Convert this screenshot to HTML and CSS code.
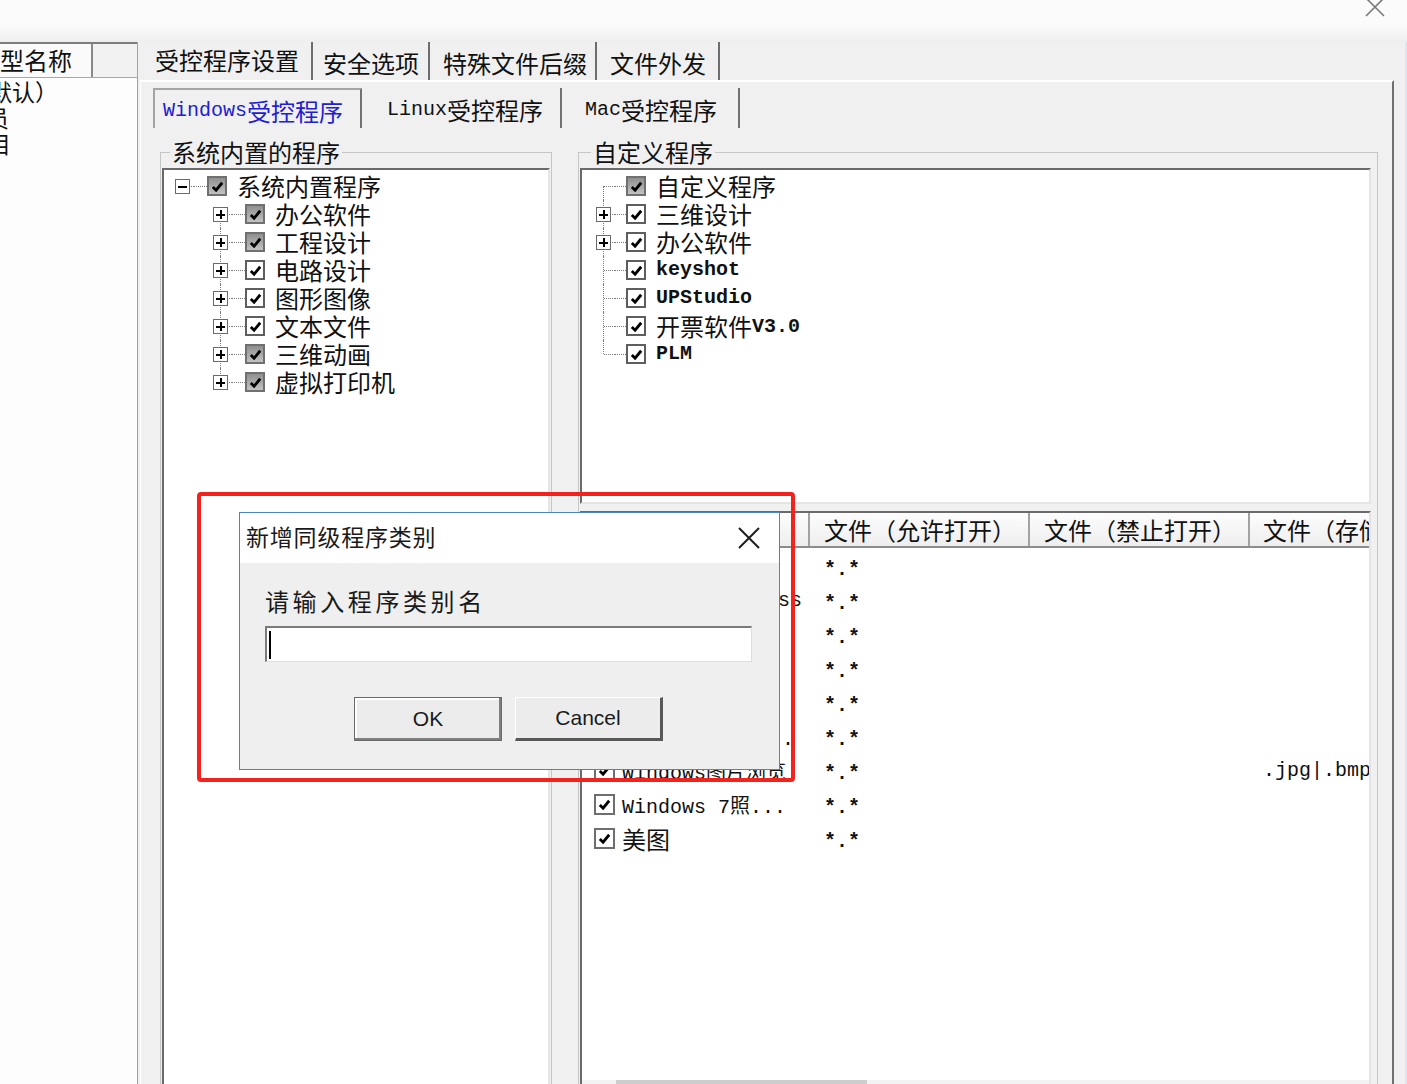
FILE: index.html
```html
<!DOCTYPE html>
<html lang="zh-CN">
<head>
<meta charset="utf-8">
<title>受控程序设置</title>
<link rel="stylesheet" href="styles.css">
</head>
<body>
<div class="window">
  <div class="titlebar">
    <svg class="win-close" width="22" height="22" viewBox="0 0 22 22"><path d="M2 2 L20 20 M20 2 L2 20" stroke="#7a7a7a" stroke-width="1.6" fill="none"/></svg>
  </div>
  <div class="main">
    <div class="typelist">
      <div class="tl-head">
        <div class="tl-c1"><span class="tl-name">类型名称</span></div>
        <div class="tl-c2"></div>
      </div>
      <div class="tl-row"><span class="off1">默认）</span></div>
      <div class="tl-row"><span class="off2">人员</span></div>
      <div class="tl-row"><span class="off3">项目</span></div>
    </div>

    <div class="tabarea">
      <div class="tabs">
        <div class="tab t1 active">受控程序设置</div>
        <div class="tab t2">安全选项</div>
        <div class="tab t3">特殊文件后缀</div>
        <div class="tab t4">文件外发</div>
      </div>
      <div class="panel">
        <div class="subtabs">
          <div class="stab s1 active"><span class="en">Windows</span>受控程序</div>
          <div class="stab s2"><span class="en">Linux</span>受控程序</div>
          <div class="stab s3"><span class="en">Mac</span>受控程序</div>
        </div>
        <div class="groups">
          <fieldset class="group g1">
            <legend>系统内置的程序</legend>
            <div class="treebox tree1">
              <div class="node root"><span class="exp minus"><i class="pm"></i></span><span class="hl"></span><span class="cb gray"><svg viewBox="0 0 16 16"><path d="M3 8.5 L6.5 12 L13 4"/></svg></span><span class="label">系统内置程序</span></div>
              <div class="node child first"><span class="exp plus"><i class="pm"></i></span><span class="hl"></span><span class="cb gray"><svg viewBox="0 0 16 16"><path d="M3 8.5 L6.5 12 L13 4"/></svg></span><span class="label">办公软件</span></div>
              <div class="node child"><span class="exp plus"><i class="pm"></i></span><span class="hl"></span><span class="cb gray"><svg viewBox="0 0 16 16"><path d="M3 8.5 L6.5 12 L13 4"/></svg></span><span class="label">工程设计</span></div>
              <div class="node child"><span class="exp plus"><i class="pm"></i></span><span class="hl"></span><span class="cb"><svg viewBox="0 0 16 16"><path d="M3 8.5 L6.5 12 L13 4"/></svg></span><span class="label">电路设计</span></div>
              <div class="node child"><span class="exp plus"><i class="pm"></i></span><span class="hl"></span><span class="cb"><svg viewBox="0 0 16 16"><path d="M3 8.5 L6.5 12 L13 4"/></svg></span><span class="label">图形图像</span></div>
              <div class="node child"><span class="exp plus"><i class="pm"></i></span><span class="hl"></span><span class="cb"><svg viewBox="0 0 16 16"><path d="M3 8.5 L6.5 12 L13 4"/></svg></span><span class="label">文本文件</span></div>
              <div class="node child"><span class="exp plus"><i class="pm"></i></span><span class="hl"></span><span class="cb gray"><svg viewBox="0 0 16 16"><path d="M3 8.5 L6.5 12 L13 4"/></svg></span><span class="label">三维动画</span></div>
              <div class="node child last"><span class="exp plus"><i class="pm"></i></span><span class="hl"></span><span class="cb gray"><svg viewBox="0 0 16 16"><path d="M3 8.5 L6.5 12 L13 4"/></svg></span><span class="label">虚拟打印机</span></div>
            </div>
          </fieldset>

          <fieldset class="group g2">
            <legend>自定义程序</legend>
            <div class="treebox tree2">
              <div class="node rnode first"><span class="exp"></span><span class="hl"></span><span class="cb gray"><svg viewBox="0 0 16 16"><path d="M3 8.5 L6.5 12 L13 4"/></svg></span><span class="label">自定义程序</span></div>
              <div class="node rnode"><span class="exp plus"><i class="pm"></i></span><span class="hl"></span><span class="cb"><svg viewBox="0 0 16 16"><path d="M3 8.5 L6.5 12 L13 4"/></svg></span><span class="label">三维设计</span></div>
              <div class="node rnode"><span class="exp plus"><i class="pm"></i></span><span class="hl"></span><span class="cb"><svg viewBox="0 0 16 16"><path d="M3 8.5 L6.5 12 L13 4"/></svg></span><span class="label">办公软件</span></div>
              <div class="node rnode"><span class="exp"></span><span class="hl"></span><span class="cb"><svg viewBox="0 0 16 16"><path d="M3 8.5 L6.5 12 L13 4"/></svg></span><span class="label en">keyshot</span></div>
              <div class="node rnode"><span class="exp"></span><span class="hl"></span><span class="cb"><svg viewBox="0 0 16 16"><path d="M3 8.5 L6.5 12 L13 4"/></svg></span><span class="label en">UPStudio</span></div>
              <div class="node rnode"><span class="exp"></span><span class="hl"></span><span class="cb"><svg viewBox="0 0 16 16"><path d="M3 8.5 L6.5 12 L13 4"/></svg></span><span class="label">开票软件</span><span class="en">V3.0</span></div>
              <div class="node rnode last"><span class="exp"></span><span class="hl"></span><span class="cb"><svg viewBox="0 0 16 16"><path d="M3 8.5 L6.5 12 L13 4"/></svg></span><span class="label en">PLM</span></div>
            </div>

            <div class="listbox">
              <div class="lv-head">
                <div class="hc h1">程序名称</div>
                <div class="hc h2">文件（允许打开）</div>
                <div class="hc h3">文件（禁止打开）</div>
                <div class="hc h4">文件（存储类型）</div>
              </div>
              <div class="lv-body">
                <div class="lv-row"><div class="c c1"><span class="cb lcb"><svg viewBox="0 0 16 16"><path d="M3 8.5 L6.5 12 L13 4"/></svg></span><span class="name">画图</span></div><div class="c c2 mono">*.*</div><div class="c c3"></div><div class="c c4"></div></div>
                <div class="lv-row"><div class="c c1"><span class="cb lcb"><svg viewBox="0 0 16 16"><path d="M3 8.5 L6.5 12 L13 4"/></svg></span><span class="name mono">PicPick Express</span></div><div class="c c2 mono">*.*</div><div class="c c3"></div><div class="c c4"></div></div>
                <div class="lv-row"><div class="c c1"><span class="cb lcb"><svg viewBox="0 0 16 16"><path d="M3 8.5 L6.5 12 L13 4"/></svg></span><span class="name mono">Paint.NET</span></div><div class="c c2 mono">*.*</div><div class="c c3"></div><div class="c c4"></div></div>
                <div class="lv-row"><div class="c c1"><span class="cb lcb"><svg viewBox="0 0 16 16"><path d="M3 8.5 L6.5 12 L13 4"/></svg></span><span class="name">看图王</span></div><div class="c c2 mono">*.*</div><div class="c c3"></div><div class="c c4"></div></div>
                <div class="lv-row"><div class="c c1"><span class="cb lcb"><svg viewBox="0 0 16 16"><path d="M3 8.5 L6.5 12 L13 4"/></svg></span><span class="name">光影看图</span></div><div class="c c2 mono">*.*</div><div class="c c3"></div><div class="c c4"></div></div>
                <div class="lv-row"><div class="c c1"><span class="cb lcb"><svg viewBox="0 0 16 16"><path d="M3 8.5 L6.5 12 L13 4"/></svg></span><span class="name mono">Windows 照片...</span></div><div class="c c2 mono">*.*</div><div class="c c3"></div><div class="c c4"></div></div>
                <div class="lv-row"><div class="c c1"><span class="cb lcb"><svg viewBox="0 0 16 16"><path d="M3 8.5 L6.5 12 L13 4"/></svg></span><span class="name mono">Windows图片浏览</span></div><div class="c c2 mono">*.*</div><div class="c c3"></div><div class="c c4 mono">.jpg|.bmp</div></div>
                <div class="lv-row"><div class="c c1"><span class="cb lcb"><svg viewBox="0 0 16 16"><path d="M3 8.5 L6.5 12 L13 4"/></svg></span><span class="name mono">Windows 7照...</span></div><div class="c c2 mono">*.*</div><div class="c c3"></div><div class="c c4"></div></div>
                <div class="lv-row"><div class="c c1"><span class="cb lcb"><svg viewBox="0 0 16 16"><path d="M3 8.5 L6.5 12 L13 4"/></svg></span><span class="name">美图</span></div><div class="c c2 mono">*.*</div><div class="c c3"></div><div class="c c4"></div></div>
              </div>
              <div class="lv-scroll"><div class="thumb"></div></div>
            </div>
          </fieldset>
        </div>
      </div>
    </div>
    <div class="edge"></div>
  </div>

  <div class="highlight"></div>

  <div class="dialog">
    <div class="dlg-title">
      <span>新增同级程序类别</span>
      <svg class="dlg-close" width="24" height="24" viewBox="0 0 24 24"><path d="M2 2 L22 22 M22 2 L2 22" stroke="#1e1e1e" stroke-width="2" fill="none"/></svg>
    </div>
    <div class="dlg-body">
      <div class="dlg-label">请输入程序类别名</div>
      <div class="dlg-input"><span class="caret"></span></div>
      <div class="dlg-btns">
        <div class="btn btn-ok">OK</div>
        <div class="btn btn-cancel">Cancel</div>
      </div>
    </div>
  </div>
</div>
</body>
</html>
```

FILE: styles.css
```css
html, body {
  margin: 0;
  padding: 0;
}
body {
  background: #f0f0f0;
  font-family: "Noto Sans CJK SC", "Noto Sans", sans-serif;
  color: #111;
}
.window {
  position: relative;
  width: 1407px;
  height: 1084px;
  overflow: hidden;
  display: flex;
  flex-direction: column;
}
.titlebar {
  height: 42px;
  flex: none;
  background: linear-gradient(to bottom, #fbfbfb 0, #fbfbfb 24px, #eeeeee 42px);
  display: flex;
  justify-content: flex-end;
  align-items: flex-start;
  padding-right: 21px;
}
.win-close {
  margin-top: -4px;
}
.main {
  flex: 1;
  display: flex;
  min-height: 0;
}

/* left type list */
.typelist {
  width: 137px;
  flex: none;
  background: #fdfdfd;
  border-right: 1px solid #a3a3a3;
  overflow: hidden;
}
.tl-head {
  display: flex;
  height: 36px;
  box-sizing: border-box;
  border-top: 2px solid #7d7d7d;
  border-bottom: 1px solid #a8a8a8;
  background: #fafafa;
}
.tl-c1 {
  width: 91px;
  flex: none;
  border-right: 2px solid #8a8a8a;
  overflow: hidden;
  white-space: nowrap;
  font-size: 24px;
  line-height: 32px;
}
.tl-name { margin-left: -24px; }
.tl-c2 {
  flex: 1;
  background: #f2f2f2;
}
.tl-row {
  height: 26px;
  line-height: 26px;
  font-size: 23px;
  white-space: nowrap;
  overflow: hidden;
}
.off1 { margin-left: -11px; }
.off2 { margin-left: -37px; }
.off3 { margin-left: -35px; }

/* tabs */
.tabarea {
  flex: 1;
  margin-left: 2px;
  display: flex;
  flex-direction: column;
  min-width: 0;
}
.tabs {
  height: 38px;
  flex: none;
  display: flex;
  margin-left: 3px;
}
.tab {
  display: flex;
  align-items: center;
  height: 35px;
  border-right: 2px solid #6d6d6d;
  font-size: 24px;
  white-space: nowrap;
}
.tab.active { padding-bottom: 3px; }
.tab:not(.active) { padding-top: 3px; }
.t1 { padding-left: 12px; padding-right: 12px; }
.t2 { padding-left: 10px; padding-right: 9px; }
.t3 { padding-left: 13px; padding-right: 8px; }
.t4 { padding-left: 13px; padding-right: 12px; }

.panel {
  flex: 1;
  min-height: 0;
  border-top: 2px solid #ffffff;
  border-left: 1px solid #ffffff;
  border-right: 2px solid #6f6f6f;
  background: #f0f0f1;
  padding-top: 6px;
  overflow: hidden;
}
.subtabs {
  display: flex;
  height: 40px;
  margin-left: 12px;
}
.stab {
  display: flex;
  align-items: center;
  height: 40px;
  box-sizing: border-box;
  padding-top: 3px;
  border-right: 2px solid #727272;
  font-size: 24px;
  white-space: nowrap;
}
.s1 {
  border-left: 2px solid #a4a4a4;
  border-top: 2px solid #a4a4a4;
  padding-left: 8px;
  padding-right: 17px;
  color: #2020d0;
}
.s2 { padding-left: 25px; padding-right: 17px; }
.s3 { padding-left: 23px; padding-right: 21px; }
.en {
  font-family: "Liberation Mono", monospace;
  font-size: 20px;
}

/* group boxes */
.groups {
  display: flex;
  margin-top: 11px;
  margin-left: 19px;
}
.group {
  margin: 0;
  padding: 3px 1px 0 1px;
  min-width: 0;
  border: 1px solid #c6c6c6;
  border-bottom: none;
  height: 1000px;
  box-sizing: border-box;
}
.group legend {
  font-size: 24px;
  line-height: 26px;
  padding: 0 2px;
  margin-left: 8px;
  white-space: nowrap;
}
.g1 { width: 392px; }
.g2 { width: 800px; margin-left: 26px; }
.g2 legend { margin-left: 11px; }

.treebox {
  background: #fff;
  box-sizing: border-box;
  border-top: 2px solid #6a6a6a;
  border-left: 2px solid #6a6a6a;
  border-right: 2px solid #e4e4e4;
  border-bottom: 2px solid #e4e4e4;
  padding-top: 2px;
  overflow: hidden;
}
.tree1 { width: 388px; height: 1000px; }
.tree2 { width: 791px; height: 336px; }

.node {
  display: flex;
  align-items: center;
  height: 28px;
}
.root { padding-left: 8px; }
.child { padding-left: 46px; }
.rnode { padding-left: 11px; }
.exp {
  position: relative;
  width: 22px;
  height: 28px;
  flex: none;
}
.exp::before {
  content: "";
  position: absolute;
  left: 10px;
  top: 0;
  bottom: 0;
  border-left: 1px dotted #7a7a7a;
}
.exp::after {
  content: "";
  position: absolute;
  left: 11px;
  right: 0;
  top: 14px;
  border-top: 1px dotted #7a7a7a;
}
.root .exp::before { display: none; }
.first .exp::before { top: 14px; }
.last .exp::before { bottom: 14px; }
.pm {
  position: absolute;
  left: 3px;
  top: 7px;
  width: 15px;
  height: 15px;
  box-sizing: border-box;
  border: 1px solid #6a6a6a;
  background: #fff;
  z-index: 1;
}
.pm::before {
  content: "";
  position: absolute;
  left: 2px;
  right: 2px;
  top: 5.5px;
  height: 2px;
  background: #000;
}
.plus .pm::after {
  content: "";
  position: absolute;
  top: 2px;
  bottom: 2px;
  left: 5.5px;
  width: 2px;
  background: #000;
}
.hl {
  width: 13px;
  flex: none;
  border-top: 1px dotted #7a7a7a;
}
.rnode .hl { width: 11px; }
.cb {
  width: 20px;
  height: 20px;
  flex: none;
  box-sizing: border-box;
  border: 2px solid #5e5e5e;
  background: #fff;
  display: flex;
  align-items: center;
  justify-content: center;
}
.cb.gray {
  background: linear-gradient(#8f8f8f, #c2c2c2);
  border-color: #707070;
}
.cb svg {
  width: 15px;
  height: 15px;
}
.cb path {
  fill: none;
  stroke: #000;
  stroke-width: 3;
}
.label {
  margin-left: 10px;
  font-size: 24px;
  line-height: 28px;
  white-space: nowrap;
}
.label.en {
  font-family: "Liberation Mono", monospace;
  font-size: 20px;
  font-weight: bold;
}
.node > .en {
  font-weight: bold;
}

/* list view */
.listbox {
  margin-top: 7px;
  width: 791px;
  box-sizing: border-box;
  border-top: 2px solid #6a6a6a;
  border-left: 2px solid #6a6a6a;
  border-right: 2px solid #e4e4e4;
  background: #fff;
  overflow: hidden;
}
.lv-head {
  display: flex;
  height: 35px;
  box-sizing: border-box;
  border-bottom: 2px solid #8c8c8c;
  background: linear-gradient(#fdfdfd, #eeeeee);
}
.hc {
  flex: none;
  box-sizing: border-box;
  border-right: 2px solid #a2a2a2;
  padding-left: 14px;
  font-size: 24px;
  line-height: 33px;
  white-space: nowrap;
  overflow: hidden;
}
.h1 { width: 228px; }
.h2 { width: 220px; }
.h3 { width: 220px; }
.h4 { width: 300px; padding-left: 13px; }
.lv-body {
  height: 532px;
  box-sizing: border-box;
  padding-top: 1px;
}
.lv-row {
  display: flex;
  align-items: center;
  height: 34px;
}
.c {
  flex: none;
  white-space: nowrap;
  overflow: hidden;
}
.c1 {
  width: 228px;
  display: flex;
  align-items: center;
  padding-left: 12px;
  box-sizing: border-box;
}
.lcb {
  width: 21px;
  height: 21px;
  border: 2px solid #6e6e6e;
}
.name {
  margin-left: 7px;
  font-size: 24px;
  white-space: nowrap;
}
.name.mono {
  font-family: "Liberation Mono", "Noto Sans CJK SC", monospace;
  font-size: 20px;
}
.c.mono {
  font-family: "Liberation Mono", monospace;
  font-size: 20px;
  font-weight: bold;
  padding-top: 6px;
}
.c2 { width: 220px; padding-left: 14px; box-sizing: border-box; }
.c3 { width: 220px; }
.c4 { width: 300px; padding-left: 13px; box-sizing: border-box; }
.c4.mono { font-weight: normal; padding-top: 0; }
.lv-scroll {
  height: 17px;
  background: #f3f3f3;
}
.thumb {
  margin-left: 34px;
  width: 251px;
  height: 100%;
  background: #cdcdcd;
}

.edge {
  width: 11px;
  flex: none;
  background: #f0f0f0;
  border-right: 2px solid #dbe6f1;
}

/* overlay: red highlight + dialog */
.highlight {
  position: absolute;
  left: 197px;
  top: 492px;
  width: 598px;
  height: 290px;
  box-sizing: border-box;
  border: 4px solid #f4221c;
  border-radius: 4px;
}
.dialog {
  position: absolute;
  left: 239px;
  top: 512px;
  width: 541px;
  height: 258px;
  box-sizing: border-box;
  border: 1px solid #4a86c0;
  background: #efefef;
}
.dlg-title {
  height: 50px;
  box-sizing: border-box;
  padding: 0 18px 5px 6px;
  background: #fff;
  display: flex;
  align-items: center;
  justify-content: space-between;
  font-size: 23px;
  letter-spacing: 0.8px;
  color: #1a1a1a;
}
.dlg-close { margin-top: 5px; }
.dlg-body {
  padding: 23px 0 0 25px;
}
.dlg-label {
  font-size: 24px;
  line-height: 30px;
  letter-spacing: 3.6px;
  color: #1a1a1a;
}
.dlg-input {
  margin-top: 10px;
  width: 487px;
  height: 36px;
  box-sizing: border-box;
  border-top: 2px solid #7b7b7b;
  border-left: 2px solid #7b7b7b;
  border-right: 1px solid #dedede;
  border-bottom: 1px solid #dedede;
  background: #fff;
  display: flex;
  align-items: center;
  padding-left: 2px;
}
.caret {
  width: 2px;
  height: 28px;
  background: #000;
}
.dlg-btns {
  display: flex;
  gap: 13px;
  margin-top: 35px;
  margin-left: 89px;
}
.btn {
  width: 148px;
  height: 44px;
  box-sizing: border-box;
  font-family: "Liberation Sans", Arial, sans-serif;
  font-size: 21px;
  display: flex;
  align-items: center;
  justify-content: center;
  background: #ececec;
  color: #1a1a1a;
}
.btn-ok {
  border: 1px solid #6a6a6a;
  box-shadow: inset -2px -2px 0 #7e7e7e, inset 2px 2px 0 #ffffff;
}
.btn-cancel {
  border-top: 1px solid #ffffff;
  border-left: 1px solid #ffffff;
  border-right: 3px solid #585858;
  border-bottom: 3px solid #585858;
}
```
